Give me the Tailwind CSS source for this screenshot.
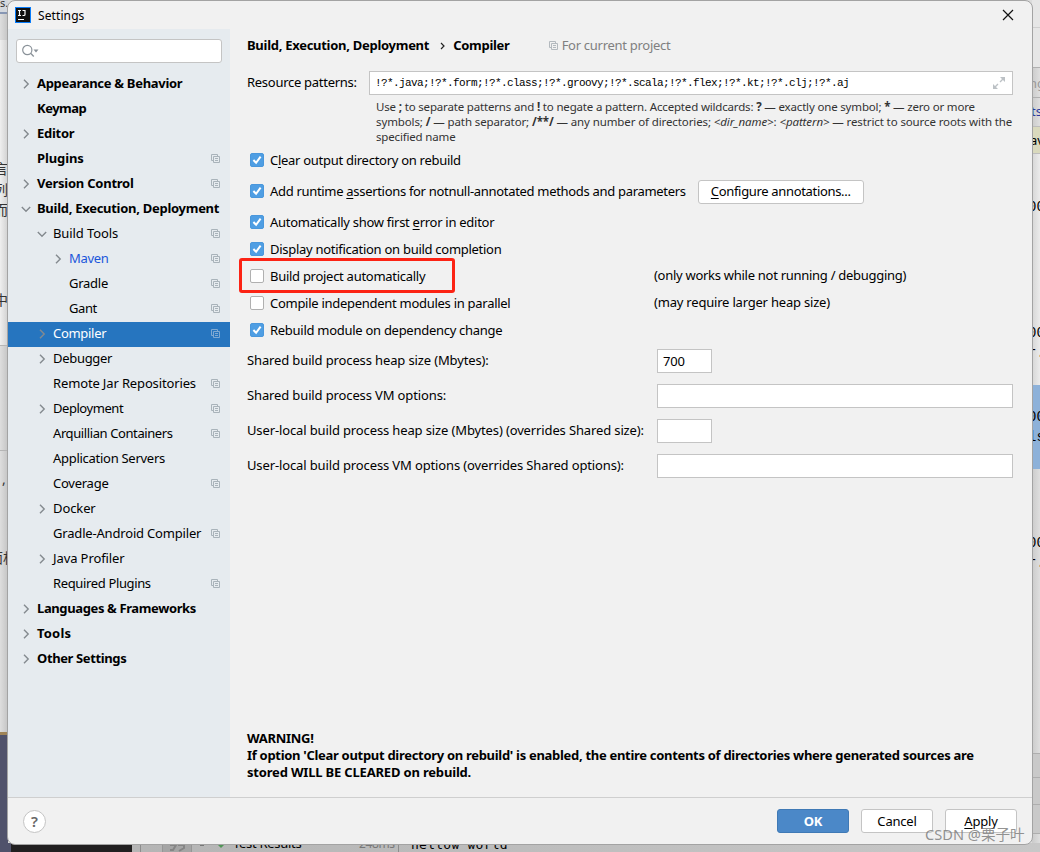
<!DOCTYPE html>
<html lang="en">
<head>
    <meta charset="UTF-8">
    <meta name="viewport" content="width=device-width, initial-scale=1.0">
    <title>Settings</title>
    <script src="https://cdn.jsdelivr.net/npm/@tailwindcss/browser@4"></script>
</head>
<body class="relative w-[1040px] h-[852px] overflow-hidden bg-[#dcdcdc] font-['Noto_Sans','Noto_Sans_CJK_SC',sans-serif] text-[13px] leading-[17px] text-black">
    <svg class="hidden">
        <symbol id="copy" viewBox="0 0 10 10"><path d="M2.5 6.5h-2v-6h6v2M2.5 2.5h6v6h-6zM4 4.5h3M4 6.5h3" fill="none" stroke="currentColor"/></symbol>
        <symbol id="right" viewBox="0 0 10 10"><path d="M3 .8 7.2 5 3 9.2" fill="none" stroke="currentColor" stroke-width="1.4"/></symbol>
        <symbol id="down" viewBox="0 0 10 10"><path d="M.8 3 5 7.2 9.2 3" fill="none" stroke="currentColor" stroke-width="1.4"/></symbol>
        <symbol id="check" viewBox="0 0 14 14"><path d="M3.4 7 6.1 9.8 10.6 3.6" fill="none" stroke="#fff" stroke-width="2"/></symbol>
    </svg>

    <!-- Windows behind the dialog -->
    <div class="absolute left-0 top-0 w-2 h-[852px] overflow-hidden bg-gradient-to-r from-[#dedede] to-[#c4c4c4] text-[#333] text-[14px]">
        <div class="absolute left-0 top-0 w-2 h-3 bg-[#d4d8de]"></div>
        <span class="absolute left-0 -top-1.5 text-[11px]">s.c</span>
        <div class="absolute left-0 top-3 w-2 h-0.5 bg-[#8796b3]"></div>
        <div class="absolute left-0 top-10 w-2 h-[305px] bg-gradient-to-r from-[#efefef] to-[#d0d0d0]"></div>
        <span class="absolute -left-1.5 top-[160px]">言</span>
        <span class="absolute -left-1.5 top-[181px]">列</span>
        <span class="absolute -left-1.5 top-[201px]">而</span>
        <span class="absolute -left-1.5 top-[291px]">中</span>
        <div class="absolute left-0 top-[345px] w-2 h-px bg-[#b5b5b5]"></div>
        <div class="absolute left-0 top-[450px] w-2 h-px bg-[#b5b5b5]"></div>
        <span class="absolute left-0.5 top-[470px]">,</span>
        <span class="absolute -left-[11px] top-[549px] w-8">面机</span>
        <div class="absolute left-0 top-[732px] w-2 h-[3px] bg-[#a08457]"></div>
        <div class="absolute left-0 top-[735px] w-2 h-[117px] bg-[#50526b]"></div>
    </div>
    <div class="absolute left-[1032px] top-0 w-2 h-[852px] overflow-hidden bg-gradient-to-r from-[#cbcbcb] to-[#dedede] font-['Liberation_Mono',monospace] text-[14px]">
        <div class="absolute left-0 top-0 w-2 h-[68px] border-b border-[#b0b0b0] bg-[#e6e6e6]"></div>
        <div class="absolute left-0 top-[27px] w-2 h-px bg-[#cfcfcf]"></div>
        <span class="absolute -left-[3px] top-[75px] font-['Noto_Sans',sans-serif] text-[13px] text-[#999]">ng</span>
        <div class="absolute left-0 top-[97px] w-2 h-px bg-[#b0b0b0]"></div>
        <span class="absolute -left-px top-[103px] font-['Noto_Sans',sans-serif] text-[13px] text-[#2b3a9b]">ts</span>
        <div class="absolute left-0 top-[126px] w-2 h-[28px] border-y border-[#bdbdbd] bg-[#d9d9bd]"></div>
        <span class="absolute -left-0.5 top-[132px] font-['Noto_Sans',sans-serif] text-[13px]">av</span>
        <div class="absolute left-0 top-[154px] w-2 h-[231px] bg-gradient-to-r from-[#d6d6d6] to-[#ebebeb]"></div>
        <div class="absolute left-0 top-[385px] w-2 h-[84px] bg-[#8db1d9]"></div>
        <span class="absolute -left-1 top-[199px]">00</span>
        <span class="absolute -left-1 top-[325px]">00</span>
        <span class="absolute -left-1 top-[345px]">r.</span>
        <span class="absolute -left-1 top-[409px]">00</span>
        <span class="absolute -left-1 top-[429px]">ls</span>
        <span class="absolute -left-1 top-[535px]">00</span>
        <span class="absolute -left-1 top-[555px]">r.</span>
        <div class="absolute left-0 top-[753px] w-2 h-[81px] border-y border-[#aeaeae] bg-[#c9c9c9]"></div>
        <div class="absolute left-0 top-[777px] w-2 h-[28px] border-y border-[#aeaeae]"></div>
    </div>
    <div class="absolute left-0 top-[843px] w-[1040px] h-[9px] overflow-hidden bg-gradient-to-r from-[#b2b2b2] to-[#c8c8c8]">
        <div class="absolute left-0 top-0 w-[11px] h-[9px] bg-[#50526b]"></div>
        <div class="absolute left-[11px] top-0 w-[121px] h-[9px] bg-[#211f20]"></div>
        <div class="absolute left-[140px] top-0 w-px h-[9px] bg-[#8d8d8d]"></div>
        <div class="absolute left-[162px] top-0 w-[30px] h-[9px] border-x border-[#969696] bg-[#a5a5a5]"></div>
        <svg class="absolute left-[168px] top-0" width="20" height="9"><path d="M2 2h6l-3 5H2M10 2h6v3l-5 3" fill="none" stroke="#858585" stroke-width="2"/></svg>
        <div class="absolute left-[200px] top-px w-1 h-0.5 bg-[#777]"></div>
        <svg class="absolute left-[216px] top-0" width="10" height="6"><path d="M0 0h10L5 5z" fill="#519657"/></svg>
        <span class="absolute left-[233px] -top-[8px] tracking-[-.3px] whitespace-nowrap">Test Results</span>
        <span class="absolute left-[359px] -top-[8px] text-[12px] tracking-[-.4px] text-[#777]">248ms</span>
        <div class="absolute left-[398px] top-0 w-px h-[9px] bg-[#8d8d8d]"></div>
        <span class="absolute left-[411px] -top-[7px] font-['DejaVu_Sans_Mono',monospace] tracking-[.25px] whitespace-nowrap">hellow world</span>
    </div>

    <!-- Settings dialog -->
    <div class="absolute left-[7px] top-0 w-[1026px] h-[845px] flex flex-col rounded-[8px] border border-[#a3a3a3] bg-[#f1f1f1] overflow-hidden">
        <header class="flex h-7 shrink-0 items-center pl-[7px] pr-[18px]">
            <svg width="16" height="16" viewBox="0 0 16 16"><path d="M0 0h16v16H0z" fill="#087cfa"/><path d="M1 1h14v14H1z" fill="#111"/><path d="M3 3.5h3M4.5 3.5v5M3 8.5h3M7.5 3.5H10v4q0 1-1 1H7.5" fill="none" stroke="#fff" stroke-width="1.2"/><path d="M3 12h6v1H3z" fill="#fff"/></svg>
            <span class="ml-[7px] text-[12px] tracking-[.1px]">Settings</span>
            <svg class="ml-auto" width="12" height="12" viewBox="0 0 12 12"><path d="M1 1l10 10M11 1 1 11" stroke="#111" stroke-width="1.2"/></svg>
        </header>

        <div class="flex h-[768px] shrink-0">
            <aside class="w-[222px] shrink-0 bg-[#e6ebef] pt-2.5">
                <div class="ml-2 w-[206px] h-6 flex items-center rounded-[3px] border border-[#c4c4c4] bg-white pl-[5px]">
                    <svg width="17" height="14" viewBox="0 0 17 14"><circle cx="5.3" cy="6" r="4.6" fill="none" stroke="#8a9299" stroke-width="1.2"/><path d="M8.6 9.2l3.2 3.3" stroke="#8a9299" stroke-width="1.3"/><path d="M11.5 5.5h5L14 8.5z" fill="#8a9299"/></svg>
                </div>
                <ul id="tree" class="mt-[9px]"></ul>
            </aside>

            <main class="flex flex-col w-[802px] pl-[17px] pr-[19px] pt-2 tracking-[-.28px]">
                <div class="flex h-[17px] items-center">
                    <b>Build, Execution, Deployment</b>
                    <svg class="ml-[11px]" width="5" height="8"><path d="M1 1l3 3-3 3" fill="none" stroke="#222" stroke-width="1.2"/></svg>
                    <b class="ml-2">Compiler</b>
                    <svg class="ml-[39px] mt-px text-[#b3b9be]" width="10" height="10"><use href="#copy"/></svg>
                    <span class="ml-[3px] text-[#808080]">For current project</span>
                </div>

                <div class="mt-[17px] flex h-6 items-center">
                    <label class="w-[122px] -mt-px">Resource patterns:</label>
                    <div class="flex-1 h-6 flex items-center justify-between border border-[#c4c4c4] bg-white pl-[5px] pr-[7px]">
                        <span class="font-['Liberation_Mono',monospace] text-[11px] tracking-[-.6px]">!?*.java;!?*.form;!?*.class;!?*.groovy;!?*.scala;!?*.flex;!?*.kt;!?*.clj;!?*.aj</span>
                        <svg width="12" height="12"><path d="M7 0h5v5zM0 7v5h5z" fill="#bcc1c5"/><path d="M2 10l3-3M7 5l3-3" stroke="#bcc1c5" stroke-width="1.4"/></svg>
                    </div>
                </div>
                <p class="mt-[4px] ml-[129px] text-[11.5px] leading-[15px] text-[#333] whitespace-nowrap">
                    <span class="tracking-[-.17px]">Use <b>;</b> to separate patterns and <b>!</b> to negate a pattern. Accepted wildcards: <b>?</b> — exactly one symbol; <b>*</b> — zero or more</span><br>
                    <span class="tracking-[-.11px]">symbols; <b>/</b> — path separator; <b>/**/</b> — any number of directories; <i>&lt;dir_name&gt;</i>: <i>&lt;pattern&gt;</i> — restrict to source roots with the</span><br>
                    <span class="tracking-[-.17px]">specified name</span>
                </p>

                <div id="options" class="mt-px"></div>

                <div class="mt-[5px] flex flex-col gap-[11px] tracking-[-.13px]">
                    <div class="flex h-6 items-center"><label class="w-[410px] -mt-px">Shared build process heap size (Mbytes):</label><div class="w-[55px] h-6 flex items-center border border-[#c4c4c4] bg-white pl-[5px]">700</div></div>
                    <div class="flex h-6 items-center"><label class="w-[410px] -mt-px">Shared build process VM options:</label><div class="flex-1 h-6 border border-[#c4c4c4] bg-white"></div></div>
                    <div class="flex h-6 items-center"><label class="w-[410px] -mt-px whitespace-nowrap">User-local build process heap size (Mbytes) (overrides Shared size):</label><div class="w-[55px] h-6 border border-[#c4c4c4] bg-white"></div></div>
                    <div class="flex h-6 items-center"><label class="w-[410px] -mt-px">User-local build process VM options (overrides Shared options):</label><div class="flex-1 h-6 border border-[#c4c4c4] bg-white"></div></div>
                </div>

                <p class="mt-auto mb-4 font-bold whitespace-nowrap">
                    WARNING!<br>
                    <span class="tracking-[-.3px]">If option 'Clear output directory on rebuild' is enabled, the entire contents of directories where generated sources are</span><br>
                    <span class="tracking-[-.18px]">stored WILL BE CLEARED on rebuild.</span>
                </p>
            </main>
        </div>

        <footer class="flex h-[47px] items-center border-t border-[#cfcfcf] pl-[15px] pr-[15px]">
            <div class="w-[23px] h-[23px] flex items-center justify-center rounded-full border border-[#c4c4c4] bg-white text-[15px] font-semibold text-[#666]">?</div>
            <div class="ml-auto flex gap-3 tracking-[-.2px]">
                <div class="w-[72px] h-6 flex items-center justify-center rounded-[3px] border border-[#3f79b5] bg-[#4b88c8] font-bold text-white">OK</div>
                <div class="w-[72px] h-6 flex items-center justify-center rounded-[3px] border border-[#c4c4c4] bg-white">Cancel</div>
                <div class="w-[72px] h-6 flex items-center justify-center rounded-[3px] border border-[#c4c4c4] bg-white"><u class="underline-offset-2">A</u>pply</div>
            </div>
        </footer>
    </div>

    <!-- Highlight box and watermark -->
    <div class="absolute left-[239px] top-[258px] w-[216px] h-[35px] rounded-[3px] border-3 border-[#fc2314]"></div>
    <div class="absolute left-[925px] top-[824px] text-[14.6px] leading-5 text-[#777]/80 whitespace-nowrap">CSDN @栗子叶</div>

    <script>
        // [label, level, arrow, copy icon, letter spacing]
        const tree = [
            ['Appearance &amp; Behavior', 0, 'right', 0, 'tracking-[-.3px]'],
            ['Keymap', 0, '', 0, 'tracking-[-.5px]'],
            ['Editor', 0, 'right', 0, 'tracking-[-.28px]'],
            ['Plugins', 0, '', 1, 'tracking-[-.1px]'],
            ['Version Control', 0, 'right', 1, 'tracking-[-.24px]'],
            ['Build, Execution, Deployment', 0, 'down', 0, 'tracking-[-.28px]'],
            ['Build Tools', 1, 'down', 1, 'tracking-[-.1px]'],
            ['Maven', 2, 'right', 1, 'tracking-[-.3px]'],
            ['Gradle', 2, '', 1, 'tracking-[-.25px]'],
            ['Gant', 2, '', 1, 'tracking-[-.4px]'],
            ['Compiler', 1, 'right', 1, 'tracking-[-.3px]'],
            ['Debugger', 1, 'right', 0, 'tracking-[-.3px]'],
            ['Remote Jar Repositories', 1, '', 1, 'tracking-[-.14px]'],
            ['Deployment', 1, 'right', 1, 'tracking-[-.45px]'],
            ['Arquillian Containers', 1, '', 1, 'tracking-[-.4px]'],
            ['Application Servers', 1, '', 0, 'tracking-[-.28px]'],
            ['Coverage', 1, '', 1, 'tracking-[-.25px]'],
            ['Docker', 1, 'right', 0, 'tracking-[-.1px]'],
            ['Gradle-Android Compiler', 1, '', 1, 'tracking-[-.18px]'],
            ['Java Profiler', 1, 'right', 0, 'tracking-[-.1px]'],
            ['Required Plugins', 1, '', 1, 'tracking-[-.36px]'],
            ['Languages &amp; Frameworks', 0, 'right', 0, 'tracking-[-.38px]'],
            ['Tools', 0, 'right', 0, 'tracking-[.2px]'],
            ['Other Settings', 0, 'right', 0, 'tracking-[-.38px]']
        ];
        const indent = ['pl-[13px] font-bold', 'pl-[29px]', 'pl-[45px]'];
        document.getElementById('tree').innerHTML = tree.map(([label, level, arrow, copy, spacing]) => `
            <li class="flex h-[25px] items-center pr-[9px] whitespace-nowrap ${indent[level]} ${label === 'Compiler' ? 'bg-[#2675bf] text-white' : ''} ${label === 'Maven' ? 'text-[#1a56db]' : ''}">
                <svg class="mr-[6px] -mt-px shrink-0 text-[#848a8f]" width="10" height="10">${arrow ? `<use href="#${arrow}"/>` : ''}</svg>
                <span class="-mt-0.5 ${spacing}">${label}</span>
                ${copy ? `<svg class="ml-auto -mt-px ${label === 'Compiler' ? 'text-[#7fa9d2]' : 'text-[#a9b3ba]'}" width="10" height="10"><use href="#copy"/></svg>` : ''}
            </li>`).join('');

        const u = s => `<u class="underline-offset-2">${s}</u>`;
        const button = `<span class="ml-3 w-[166px] h-6 flex items-center justify-center rounded-[3px] border border-[#c4c4c4] bg-white tracking-[-.33px]">${u('C')}onfigure annotations...</span>`;
        const options = [
            ['h-[31px]', 1, `C${u('l')}ear output directory on rebuild`, ''],
            ['h-[31px]', 1, `Add runtime ${u('a')}ssertions for notnull-annotated methods and parameters`, button],
            ['h-[31px]', 1, `Automatically show first ${u('e')}rror in editor`, ''],
            ['h-[27px] -mt-0.5', 1, 'Display notification on build completion', ''],
            ['h-[27px]', 0, 'Build project automatically', '<span class="absolute left-[407px] top-1">(only works while not running / debugging)</span>'],
            ['h-[27px]', 0, 'Compile independent modules in parallel', '<span class="absolute left-[407px] top-1 tracking-[-.2px]">(may require larger heap size)</span>'],
            ['h-[27px]', 1, 'Rebuild module on dependency change', '']
        ];
        document.getElementById('options').innerHTML = options.map(([size, on, label, extra], i) => `
            <div class="relative flex items-center pl-[3px] whitespace-nowrap ${size}">
                <svg class="mr-[6px] -mt-px rounded-[2px] border ${on ? 'border-[#4a97dc] bg-[#4f9ee3]' : 'border-[#b0b0b0] bg-white'}" width="14" height="14" viewBox="1 1 12 12">${on ? '<use href="#check" width="14" height="14"/>' : ''}</svg>
                <span class="${i === 1 ? 'tracking-[-.31px]' : ''}">${label}</span>${extra}
            </div>`).join('');
    </script>
</body>
</html>
